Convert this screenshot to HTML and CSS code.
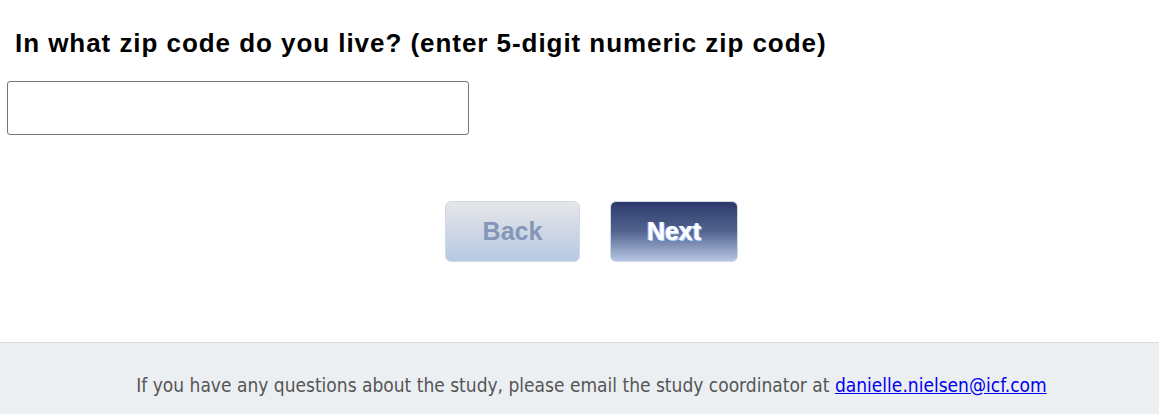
FILE: index.html
```html
<!DOCTYPE html>
<html lang="en">
<head>
  <meta charset="UTF-8"/>
  <title>Survey</title>
  <link rel="stylesheet" href="styles.css">
</head>
<body>

  <div class="question">
    <h2>In what zip code do you live? (enter 5-digit numeric zip code)</h2>
    <input type="text" id="zip" class="zip-input" />
  </div>

  <div class="buttons">
    <button class="btn back" disabled>Back</button>
    <button class="btn next">Next</button>
  </div>

  <div class="footer">
    <p>If you have any questions about the study, please email the study coordinator at <a href="#">danielle.nielsen@icf.com</a></p>
  </div>

</body>
</html>
```

FILE: styles.css
```css
* { box-sizing: border-box; margin: 0; padding: 0; }
body { font-family: 'Liberation Sans', Arial, sans-serif; background: #fff; }

.question {
  padding: 28px 7px 0;
}

.question h2 {
  font-size: 26px;
  font-weight: bold;
  color: #000;
  padding-left: 8px;
  line-height: 30px;
  letter-spacing: 0.95px;
}

.zip-input {
  display: block;
  margin-top: 23px;
  width: 462px;
  height: 54px;
  border: 1px solid #767676;
  border-radius: 3px;
  font-size: 18px;
  padding: 0 8px;
}

.buttons {
  display: flex;
  justify-content: center;
  gap: 30px;
  margin-top: 66px;
  padding-left: 24px;
  height: 141px;
}

.btn {
  height: 61px;
  border: 1px solid #d2d9e6;
  border-radius: 6px;
  font-family: 'Liberation Sans', Arial, sans-serif;
  font-size: 25px;
  font-weight: bold;
  cursor: pointer;
}

.back {
  width: 135px;
  color: #8597b8;
  background: linear-gradient(#e6e6e8, #b7c8e3);
}

.next {
  width: 128px;
  color: #fff;
  background: linear-gradient(#2b3a6b, #54648f 50%, #b6c6e2);
  text-shadow: 1px 1px 0 #9fd8ff, -1px 0 0 #c8b8ff;
}

.footer {
  background: #eceff2;
  border-top: 1px solid #dcdcdc;
  height: 80px;
  text-align: center;
  padding: 31px 0 0 24px;
}

.footer p {
  font-family: 'DejaVu Sans Condensed', 'DejaVu Sans', sans-serif;
  font-size: 19px;
  color: #555;
}

.footer a {
  color: #0000ee;
}
```
